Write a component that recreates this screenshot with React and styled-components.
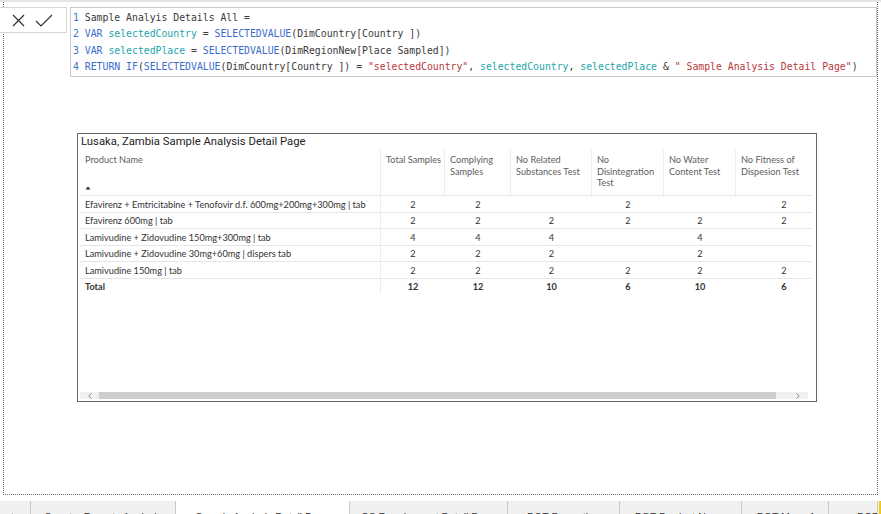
import React from "react";
import styled, { createGlobalStyle } from "styled-components";

const GlobalStyle = createGlobalStyle`
  html, body {
    margin: 0;
    padding: 0;
    background: #ffffff;
  }
  body {
    font-family: "Lato", "Liberation Sans", sans-serif;
    color: #333;
  }
`;

const Screen = styled.div`
  width: 881px;
  height: 514px;
  overflow: hidden;
  display: flex;
  flex-direction: column;
  background: #fff;
`;

const TopRule = styled.div`
  flex: none;
  height: 2px;
  background: #e4e4e4;
`;

const Canvas = styled.div`
  position: relative;
  flex: none;
  box-sizing: border-box;
  height: 493px;
  margin: 0 3px;
  border: 1px dotted #6a6a6a;
  border-top: none;
  padding: 131px 0 0 73px;
`;

/* formula bar floats over the top of the report canvas */
const FormulaBar = styled.div`
  position: absolute;
  top: 5px;
  left: -4px;
  right: 0;
  display: flex;
  align-items: flex-start;
  gap: 3px;
`;

const Actions = styled.div`
  box-sizing: border-box;
  width: 67px;
  height: 26px;
  display: flex;
  align-items: center;
  padding-left: 8px;
  gap: 6px;
  background: #fff;
  border: 1px solid #d6d6d6;
  border-left: none;
`;

const IconButton = styled.span`
  display: flex;
  align-items: center;
  justify-content: center;
  width: 20px;
  height: 20px;
`;

const CodeBox = styled.div`
  flex: 1;
  box-sizing: border-box;
  height: 70px;
  background: #fff;
  border: 1px solid #c9c9c9;
  padding: 2px 0 0 2px;
  font-family: "DejaVu Sans Mono", "Liberation Mono", monospace;
  font-size: 9.8px;
  line-height: 16.3px;
  white-space: pre;
  color: #3b3a39;
`;

const CodeLine = styled.div``;

const Tok = styled.span`
  color: ${(p) =>
    p.$k === "num"
      ? "#3f74c4"
      : p.$k === "kw"
      ? "#3a6ccc"
      : p.$k === "var"
      ? "#22a5aa"
      : p.$k === "str"
      ? "#b8383a"
      : "#3b3a39"};
`;

const Visual = styled.div`
  box-sizing: border-box;
  width: 740px;
  height: 269px;
  border: 1px solid #666;
  display: flex;
  flex-direction: column;
  background: #fff;
`;

const Title = styled.div`
  flex: none;
  height: 15px;
  padding: 1px 0 0 3px;
  font-family: "Roboto", "Liberation Sans", sans-serif;
  font-size: 11.3px;
  line-height: 14px;
  color: #252423;
`;

const TableWrap = styled.div`
  flex: 1;
  width: 732px;
  margin-left: 2px;
  overflow: hidden;
`;

const COLS = "301px 64px 66px 81px 72px 72px 96px";

const HeaderRow = styled.div`
  display: grid;
  grid-template-columns: ${COLS};
  height: 45px;
`;

const HeadCell = styled.div`
  box-sizing: border-box;
  display: flex;
  flex-direction: column;
  justify-content: space-between;
  padding: 4px 3px 5px 5px;
  border-right: 1px solid #ececec;
  font-size: 9.2px;
  line-height: 11.6px;
  color: #605e5c;
  white-space: nowrap;
`;

const Row = styled.div`
  display: grid;
  grid-template-columns: ${COLS};
  height: 16.5px;
  box-sizing: border-box;
  border-top: 1px solid #e6e6e6;
`;

const Cell = styled.div`
  box-sizing: border-box;
  display: flex;
  align-items: center;
  justify-content: ${(p) => (p.$num ? "center" : "flex-start")};
  padding-left: ${(p) => (p.$num ? "0" : "5px")};
  padding-top: 1px;
  border-right: ${(p) => (p.$divider ? "1px solid #ececec" : "none")};
  font-size: 9.2px;
  font-weight: ${(p) => (p.$bold ? 700 : 400)};
  color: #333;
  white-space: nowrap;
`;

const ScrollTrack = styled.div`
  flex: none;
  display: flex;
  align-items: stretch;
  height: 7px;
  margin: 0 8px 2px 2px;
  background: #f0f0f0;
`;

const ScrollButton = styled.span`
  width: ${(p) => p.$w}px;
  display: flex;
  align-items: center;
  justify-content: center;
`;

const ScrollThumb = styled.span`
  width: 677px;
  background: #cdcdcd;
`;

const ScrollGap = styled.span`
  flex: 1;
`;

const TabBar = styled.div`
  flex: none;
  display: flex;
  height: 30px;
  margin-top: 6px;
  background: #f0f0f0;
`;

const Tab = styled.div`
  box-sizing: border-box;
  flex: none;
  width: ${(p) => p.$w}px;
  display: flex;
  justify-content: ${(p) => p.$justify || "center"};
  padding: 9px ${(p) => p.$pr || 0}px 0 ${(p) => p.$pl || 0}px;
  overflow: hidden;
  border-right: 1px solid #c8c8c8;
  background: ${(p) => (p.$active ? "#ffffff" : "#f0f0f0")};
  font-family: "Liberation Sans", sans-serif;
  font-size: 10.5px;
  line-height: 14px;
  color: #323130;
  white-space: nowrap;
`;

const YellowEdge = styled.div`
  flex: 1;
  border-right: 2px solid #f2c811;
`;

const Chevron = ({ dir }) => (
  <svg width="4" height="6" viewBox="0 0 4 6">
    <path
      d={dir === "left" ? "M3.5 0.5 L0.8 3 L3.5 5.5" : "M0.5 0.5 L3.2 3 L0.5 5.5"}
      fill="none"
      stroke="#8a8a8a"
      strokeWidth="1"
    />
  </svg>
);

const SortArrow = () => (
  <svg width="6" height="4" viewBox="0 0 6 4">
    <path d="M0.5 3.5 L3 0.5 L5.5 3.5 Z" fill="#252423" />
  </svg>
);

const code = [
  [["num", "1 "], ["txt", "Sample Analyis Details All ="]],
  [
    ["num", "2 "],
    ["kw", "VAR "],
    ["var", "selectedCountry"],
    ["txt", " = "],
    ["kw", "SELECTEDVALUE"],
    ["txt", "(DimCountry[Country ])"],
  ],
  [
    ["num", "3 "],
    ["kw", "VAR "],
    ["var", "selectedPlace"],
    ["txt", " = "],
    ["kw", "SELECTEDVALUE"],
    ["txt", "(DimRegionNew[Place Sampled])"],
  ],
  [
    ["num", "4 "],
    ["kw", "RETURN IF"],
    ["txt", "("],
    ["kw", "SELECTEDVALUE"],
    ["txt", "(DimCountry[Country ]) = "],
    ["str", '"selectedCountry"'],
    ["txt", ", "],
    ["var", "selectedCountry"],
    ["txt", ", "],
    ["var", "selectedPlace"],
    ["txt", " & "],
    ["str", '" Sample Analysis Detail Page"'],
    ["txt", ")"],
  ],
];

const headers = [
  ["Product Name"],
  ["Total Samples"],
  ["Complying", "Samples"],
  ["No Related", "Substances Test"],
  ["No", "Disintegration", "Test"],
  ["No Water", "Content Test"],
  ["No Fitness of", "Dispesion Test"],
];

const rows = [
  ["Efavirenz + Emtricitabine + Tenofovir d.f. 600mg+200mg+300mg | tab", 2, 2, "", 2, "", 2],
  ["Efavirenz 600mg | tab", 2, 2, 2, 2, 2, 2],
  ["Lamivudine + Zidovudine 150mg+300mg | tab", 4, 4, 4, "", 4, ""],
  ["Lamivudine + Zidovudine 30mg+60mg | dispers tab", 2, 2, 2, "", 2, ""],
  ["Lamivudine 150mg | tab", 2, 2, 2, 2, 2, 2],
];

const totals = ["Total", 12, 12, 10, 6, 10, 6];

const tabs = [
  { label: "Regional Reports", w: 31, justify: "flex-end", pr: 11 },
  { label: "Country Reports Analysis", w: 145 },
  { label: "Sample Analysis Detail Page", w: 174, active: true },
  { label: "CS Requirement Detail Page", w: 158 },
  { label: "PQT Proportion", w: 112 },
  { label: "PQT Product Name", w: 122 },
  { label: "PQT Map of", w: 87 },
  { label: "PQT Map", w: 49, justify: "flex-start", pl: 28 },
];

function TableRow({ cells, bold }) {
  return (
    <Row>
      {cells.map((c, i) => (
        <Cell key={i} $num={i > 0} $divider={i === 0} $bold={bold}>
          {c}
        </Cell>
      ))}
    </Row>
  );
}

export default function App() {
  return (
    <Screen>
      <GlobalStyle />
      <TopRule />
      <Canvas>
        <FormulaBar>
          <Actions>
            <IconButton>
              <svg width="13" height="13" viewBox="0 0 13 13">
                <path d="M1 1 L12 12 M12 1 L1 12" stroke="#323130" strokeWidth="1.2" />
              </svg>
            </IconButton>
            <IconButton>
              <svg width="18" height="13" viewBox="0 0 18 13">
                <path d="M1 7 L6 12 L17 1" fill="none" stroke="#323130" strokeWidth="1.2" />
              </svg>
            </IconButton>
          </Actions>
          <CodeBox>
            {code.map((line, i) => (
              <CodeLine key={i}>
                {line.map(([k, t], j) => (
                  <Tok key={j} $k={k}>
                    {t}
                  </Tok>
                ))}
              </CodeLine>
            ))}
          </CodeBox>
        </FormulaBar>

        <Visual>
          <Title>Lusaka, Zambia Sample Analysis Detail Page</Title>
          <TableWrap>
            <HeaderRow>
              {headers.map((h, i) => (
                <HeadCell key={i}>
                  <div>
                    {h.map((line, j) => (
                      <div key={j}>{line}</div>
                    ))}
                  </div>
                  {i === 0 && <SortArrow />}
                </HeadCell>
              ))}
            </HeaderRow>
            {rows.map((r, i) => (
              <TableRow key={i} cells={r} />
            ))}
            <TableRow cells={totals} bold />
          </TableWrap>
          <ScrollTrack>
            <ScrollButton $w={19}>
              <Chevron dir="left" />
            </ScrollButton>
            <ScrollThumb />
            <ScrollGap />
            <ScrollButton $w={20}>
              <Chevron dir="right" />
            </ScrollButton>
          </ScrollTrack>
        </Visual>
      </Canvas>
      <TabBar>
        {tabs.map((t, i) => (
          <Tab
            key={i}
            $w={t.w}
            $active={t.active}
            $justify={t.justify}
            $pl={t.pl}
            $pr={t.pr}
          >
            {t.label}
          </Tab>
        ))}
        <YellowEdge />
      </TabBar>
    </Screen>
  );
}
